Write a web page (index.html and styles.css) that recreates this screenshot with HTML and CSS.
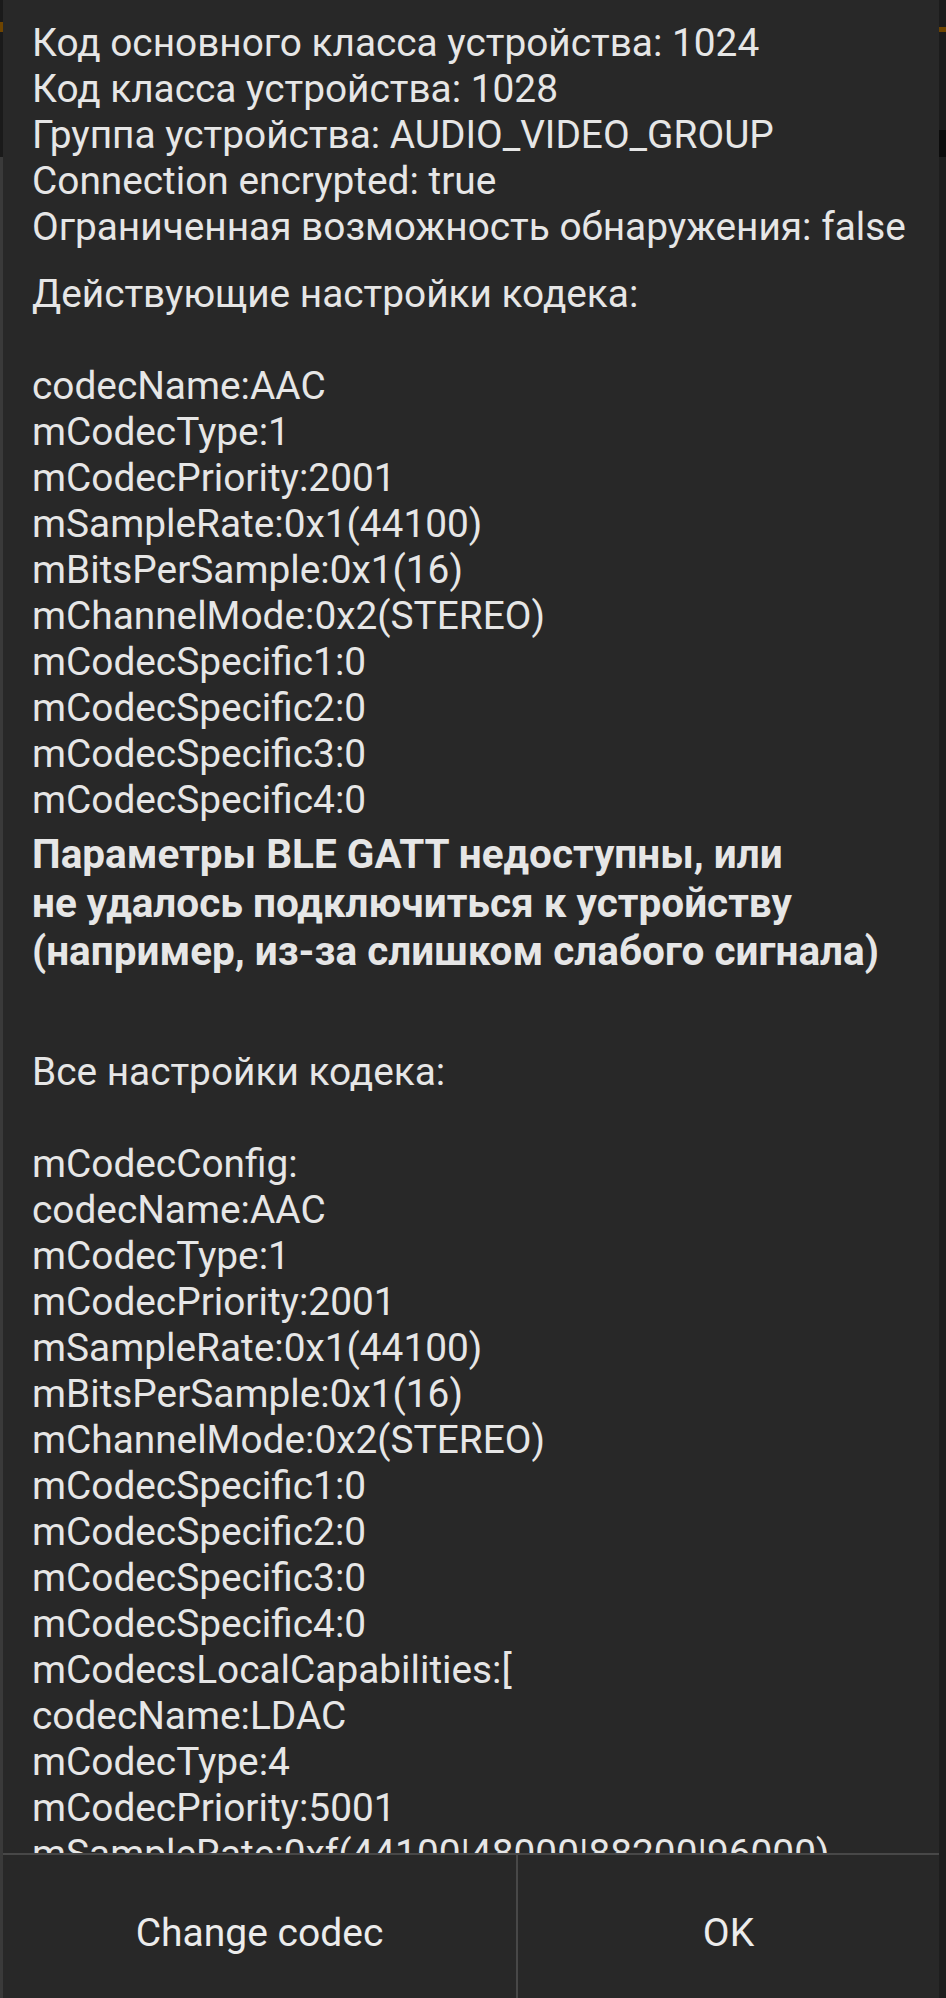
FILE: index.html
```html
<!DOCTYPE html>
<html>

<head>
  <title>Bluetooth device info</title>
  <link rel="stylesheet" href="styles.css">
</head>

<body>
  <div class="screen">
    <div class="edge edge-left"></div>

    <div class="dialog">
      <div class="content">
        <div class="block info">
          <p>Код основного класса устройства: 1024</p>
          <p>Код класса устройства: 1028</p>
          <p>Группа устройства: AUDIO_VIDEO_GROUP</p>
          <p>Connection encrypted: true</p>
          <p>Ограниченная возможность обнаружения: false</p>
        </div>

        <div class="block current">
          <p>Действующие настройки кодека:</p>
          <p class="blank"></p>
          <p>codecName:AAC</p>
          <p>mCodecType:1</p>
          <p>mCodecPriority:2001</p>
          <p>mSampleRate:0x1(44100)</p>
          <p>mBitsPerSample:0x1(16)</p>
          <p>mChannelMode:0x2(STEREO)</p>
          <p>mCodecSpecific1:0</p>
          <p>mCodecSpecific2:0</p>
          <p>mCodecSpecific3:0</p>
          <p>mCodecSpecific4:0</p>
        </div>

        <div class="block warning">
          <p>Параметры BLE GATT недоступны, или</p>
          <p>не удалось подключиться к устройству</p>
          <p>(например, из-за слишком слабого сигнала)</p>
        </div>

        <div class="block all">
          <p>Все настройки кодека:</p>
          <p class="blank"></p>
          <p>mCodecConfig:</p>
          <p>codecName:AAC</p>
          <p>mCodecType:1</p>
          <p>mCodecPriority:2001</p>
          <p>mSampleRate:0x1(44100)</p>
          <p>mBitsPerSample:0x1(16)</p>
          <p>mChannelMode:0x2(STEREO)</p>
          <p>mCodecSpecific1:0</p>
          <p>mCodecSpecific2:0</p>
          <p>mCodecSpecific3:0</p>
          <p>mCodecSpecific4:0</p>
          <p>mCodecsLocalCapabilities:[</p>
          <p>codecName:LDAC</p>
          <p>mCodecType:4</p>
          <p>mCodecPriority:5001</p>
          <p>mSampleRate:0xf(44100|48000|88200|96000)</p>
        </div>
      </div>

      <div class="actions">
        <button class="action change">Change codec</button>
        <div class="split"></div>
        <button class="action ok">OK</button>
      </div>
    </div>

    <div class="edge edge-right"></div>
  </div>
</body>

</html>
```

FILE: styles.css
```css
/* Whole phone screen */
body {
  margin: 0;
  background-color: #181818;
  font-family: Roboto, "Noto Sans", sans-serif;
}

.screen {
  display: flex;
  width: 946px;
  height: 1998px;
  overflow: hidden;
}

/* Bits of the app behind the dialog */
.edge {
  height: 100%;
}

.edge-left {
  width: 3px;
  background: linear-gradient(#1a1a1a 0, #1a1a1a 22px, #6e4400 22px, #6e4400 32px,
      #1a1a1a 32px, #1a1a1a 157px, #3a3a3a 157px);
}

.edge-right {
  width: 7px;
  background: linear-gradient(#1c1c1c 0, #1c1c1c 27px, #6e4400 27px, #6e4400 32px,
      #1c1c1c 32px, #1c1c1c 130px, #0c0c0c 130px, #0c0c0c 157px, #1e1e1e 157px);
}

/* Dialog */
.dialog {
  width: 936px;
  height: 100%;
  background-color: #282828;
  display: flex;
  flex-direction: column;
}

.content {
  flex: 1;
  overflow: hidden;
  padding: 20px 10px 0 29px;
  color: #e6e6e6;
  font-size: 38.8px;
  line-height: 46px;
}

p {
  margin: 0;
  white-space: nowrap;
}

.blank {
  height: 46px;
}

.current {
  margin-top: 21px;
}

.warning {
  margin-top: 7px;
  font-weight: bold;
  font-size: 40.5px;
  line-height: 48.5px;
}

.all {
  margin-top: 73px;
}

/* Buttons at the bottom */
.actions {
  height: 143px;
  border-top: 2px solid #484848;
  display: flex;
}

.action {
  background: none;
  border: none;
  color: #ececec;
  font-family: Roboto, "Noto Sans", sans-serif;
  font-size: 39px;
  white-space: nowrap;
  padding: 13px 0 0 0;
}

.change {
  width: 513px;
}

.split {
  width: 2px;
  background-color: #484848;
}

.ok {
  flex: 1;
}
```
